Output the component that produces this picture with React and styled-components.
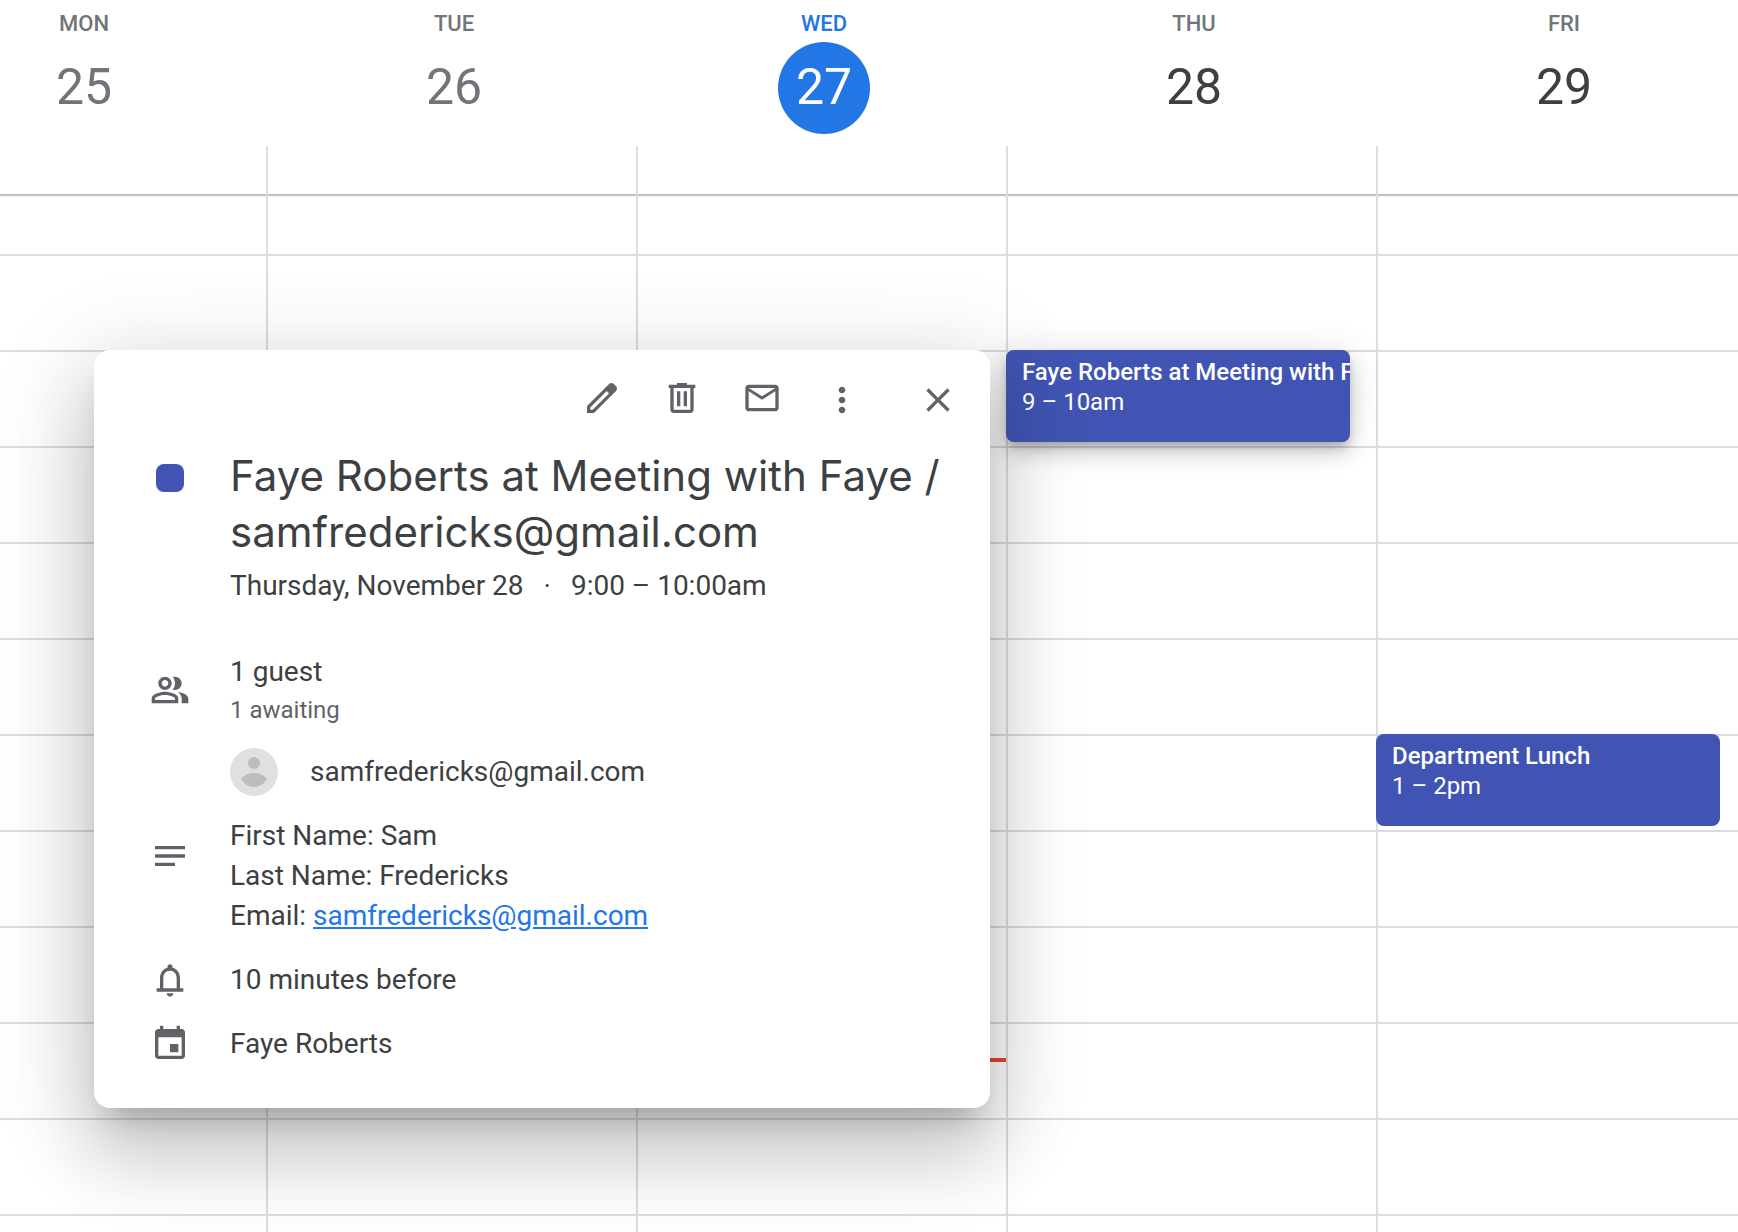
import styled, { createGlobalStyle } from "styled-components";

const HOUR_HEIGHT = 96;
const FIRST_HOUR = 8;
const FIRST_HOUR_TOP = 60;

const hourToTop = (hour) => FIRST_HOUR_TOP + (hour - FIRST_HOUR) * HOUR_HEIGHT;

const HOURS = Array.from({ length: 16 }, (_, index) => FIRST_HOUR + index);

const DAYS = [
  { key: "mon", label: "MON", date: 25, status: "past", events: [] },
  { key: "tue", label: "TUE", date: 26, status: "past", events: [] },
  { key: "wed", label: "WED", date: 27, status: "today", now: 16.375, events: [] },
  {
    key: "thu",
    label: "THU",
    date: 28,
    status: "future",
    events: [
      {
        title: "Faye Roberts at Meeting with Faye / samfredericks@gmail.com",
        time: "9 – 10am",
        start: 9,
        open: true,
      },
    ],
  },
  {
    key: "fri",
    label: "FRI",
    date: 29,
    status: "future",
    events: [{ title: "Department Lunch", time: "1 – 2pm", start: 13 }],
  },
];

const ICONS = {
  edit: "M20.41 4.94l-1.35-1.35c-.78-.78-2.05-.78-2.83 0L3 16.82V21h4.18L20.41 7.77c.79-.78.79-2.05 0-2.83zM6.41 19.06L5 19v-1.36l9.82-9.82 1.41 1.41-9.82 9.83z",
  trash:
    "M15 4V3H9v1H4v2h1v13c0 1.1.9 2 2 2h10c1.1 0 2-.9 2-2V6h1V4h-5zm2 15H7V6h10v13zM9 8h2v9H9V8zm4 0h2v9h-2V8z",
  mail: "M22 6c0-1.1-.9-2-2-2H4c-1.1 0-2 .9-2 2v12c0 1.1.9 2 2 2h16c1.1 0 2-.9 2-2V6zm-2 0l-8 5-8-5h16zm0 12H4V8l8 5 8-5v10z",
  more: "M12 8c1.1 0 2-.9 2-2s-.9-2-2-2-2 .9-2 2 .9 2 2 2zm0 2c-1.1 0-2 .9-2 2s.9 2 2 2 2-.9 2-2-.9-2-2-2zm0 6c-1.1 0-2 .9-2 2s.9 2 2 2 2-.9 2-2-.9-2-2-2z",
  close:
    "M19 6.41L17.59 5 12 10.59 6.41 5 5 6.41 10.59 12 5 17.59 6.41 19 12 13.41 17.59 19 19 17.59 13.41 12z",
  people:
    "M15 8c0-1.42-.5-2.73-1.33-3.76.42-.14.86-.24 1.33-.24 2.21 0 4 1.79 4 4s-1.79 4-4 4c-.43 0-.84-.09-1.23-.21-.03-.01-.06-.02-.1-.03A5.98 5.98 0 0 0 15 8zm1.66 5.13C18.03 14.06 19 15.32 19 17v3h4v-3c0-2.18-3.58-3.47-6.34-3.87zM9 6c-1.1 0-2 .9-2 2s.9 2 2 2 2-.9 2-2-.9-2-2-2zm0 9c-2.7 0-5.8 1.29-6 2.01V18h12v-1c-.2-.71-3.3-2-6-2zM9 4c2.21 0 4 1.79 4 4s-1.79 4-4 4-4-1.79-4-4 1.79-4 4-4zm0 9c2.67 0 8 1.34 8 4v3H1v-3c0-2.66 5.33-4 8-4z",
  notes: "M3 18h12v-2H3v2zM3 6v2h18V6H3zm0 7h18v-2H3v2z",
  bell: "M18 17v-6c0-3.07-1.63-5.64-4.5-6.32V4c0-.83-.67-1.5-1.5-1.5s-1.5.67-1.5 1.5v.68C7.63 5.36 6 7.92 6 11v6H4v2h16v-2h-2zm-2 0H8v-6c0-2.48 1.51-4.5 4-4.5s4 2.02 4 4.5v6zm-4 5c1.1 0 2-.9 2-2h-4c0 1.1.89 2 2 2z",
  calendar:
    "M17 12h-5v5h5v-5zM16 1v2H8V1H6v2H5c-1.1 0-2 .9-2 2v14c0 1.1.9 2 2 2h14c1.1 0 2-.9 2-2V5c0-1.1-.9-2-2-2h-1V1h-2zm3 18H5V8h14v11z",
};

function Icon({ name }) {
  return (
    <IconSvg viewBox="0 0 24 24" aria-hidden="true">
      <path fillRule="evenodd" d={ICONS[name]} />
    </IconSvg>
  );
}

function EventDetails({ start }) {
  return (
    <Popup role="dialog" aria-labelledby="event-title" $top={hourToTop(start)}>
      <Toolbar>
        <EventActions>
          <IconButton type="button" aria-label="Edit event">
            <Icon name="edit" />
          </IconButton>
          <IconButton type="button" aria-label="Delete event">
            <Icon name="trash" />
          </IconButton>
          <IconButton type="button" aria-label="Email guests">
            <Icon name="mail" />
          </IconButton>
        </EventActions>
        <IconButton type="button" aria-label="Options">
          <Icon name="more" />
        </IconButton>
        <CloseButton type="button" aria-label="Close">
          <Icon name="close" />
        </CloseButton>
      </Toolbar>

      <TitleRow>
        <Swatch />
        <div>
          <Title id="event-title">
            Faye Roberts at Meeting with Faye / samfredericks@gmail.com
          </Title>
          <When>
            <span>Thursday, November 28</span>
            <span>·</span>
            <span>9:00 – 10:00am</span>
          </When>
        </div>
      </TitleRow>

      <Row $gap={46}>
        <Icon name="people" />
        <div>
          <Text>1 guest</Text>
          <Awaiting>1 awaiting</Awaiting>
        </div>
      </Row>
      <Guest>
        <Avatar viewBox="0 0 48 48" aria-hidden="true">
          <circle cx="24" cy="24" r="24" fill="#e0e0e0" />
          <circle cx="24" cy="15" r="6" fill="#bdbdbd" />
          <path d="M11 31c3-4 8-6 13-6s10 2 13 6c-3 5-8 8-13 8s-10-3-13-8z" fill="#bdbdbd" />
        </Avatar>
        <Text>samfredericks@gmail.com</Text>
      </Guest>
      <Row $gap={20} $alignTop>
        <NotesIcon>
          <Icon name="notes" />
        </NotesIcon>
        <div>
          <Text>First Name: Sam</Text>
          <Text>Last Name: Fredericks</Text>
          <Text>
            Email: <MailLink href="mailto:samfredericks@gmail.com">samfredericks@gmail.com</MailLink>
          </Text>
        </div>
      </Row>
      <Row $gap={24}>
        <Icon name="bell" />
        <Text>10 minutes before</Text>
      </Row>
      <Row $gap={24}>
        <Icon name="calendar" />
        <Text>Faye Roberts</Text>
      </Row>
    </Popup>
  );
}

export default function App() {
  return (
    <Page>
      <GlobalStyle />
      <Week>
        {DAYS.map((day) => (
          <DayHeader key={day.key}>
            <DayName $status={day.status}>{day.label}</DayName>
            <DayNumber $status={day.status}>{day.date}</DayNumber>
          </DayHeader>
        ))}
      </Week>
      <AllDayRow>
        {DAYS.map((day) => (
          <AllDayCell key={day.key} />
        ))}
      </AllDayRow>
      <Week>
        {DAYS.map((day) => (
          <DayColumn key={day.key}>
            {HOURS.map((hour) => (
              <HourCell key={hour} $first={hour === FIRST_HOUR} />
            ))}
            {day.now && <NowLine $top={hourToTop(day.now)} />}
            {day.events.map((event) => (
              <EventChip
                key={event.title}
                type="button"
                $top={hourToTop(event.start)}
                $open={event.open}
              >
                <EventTitle>{event.title}</EventTitle>
                <EventTime>{event.time}</EventTime>
              </EventChip>
            ))}
            {day.events
              .filter((event) => event.open)
              .map((event) => (
                <EventDetails key={event.title} start={event.start} />
              ))}
          </DayColumn>
        ))}
      </Week>
    </Page>
  );
}

const GlobalStyle = createGlobalStyle`
  *, *::before, *::after {
    box-sizing: border-box;
  }

  body {
    margin: 0;
    background: #fff;
    font-family: Roboto, "Liberation Sans", sans-serif;
  }
`;

const Page = styled.main`
  height: 100vh;
  overflow: hidden;
  color: #3c4043;
`;

/* The week is wider than the window, Monday is cut off on the left. */
const Week = styled.div`
  display: grid;
  grid-template-columns: repeat(5, 1fr);
  width: calc(100% + 112px);
  margin-left: -104px;
`;

const DayHeader = styled.div`
  display: flex;
  flex-direction: column;
  align-items: center;
  gap: 4px;
  padding: 10px 0 12px 6px;
`;

const DAY_NAME_COLORS = { past: "#70757a", today: "#2376e6", future: "#70757a" };
const DAY_NUMBER_COLORS = { past: "#70757a", today: "#fff", future: "#3c4043" };

const DayName = styled.span`
  color: ${({ $status }) => DAY_NAME_COLORS[$status]};
  font-size: 22px;
  font-weight: 500;
  line-height: 28px;
`;

const DayNumber = styled.span`
  display: flex;
  align-items: center;
  justify-content: center;
  width: 92px;
  height: 92px;
  padding-bottom: 2px;
  border-radius: 50%;
  background: ${({ $status }) => ($status === "today" ? "#2376e6" : "transparent")};
  color: ${({ $status }) => DAY_NUMBER_COLORS[$status]};
  font-size: 50px;
`;

const AllDayRow = styled(Week)`
  position: relative;
  height: 48px;
  box-shadow:
    0 1px 0 rgba(0, 0, 0, 0.1),
    0 2px 0 rgba(0, 0, 0, 0.16),
    0 3px 0 rgba(0, 0, 0, 0.06);
`;

const AllDayCell = styled.div`
  border-left: 2px solid #dadce0;
`;

const DayColumn = styled.div`
  position: relative;
  border-left: 2px solid #dadce0;
`;

const HourCell = styled.div`
  height: ${({ $first }) => ($first ? FIRST_HOUR_TOP + 2 : HOUR_HEIGHT)}px;
  border-bottom: 2px solid #dadce0;
`;

const NowLine = styled.div`
  position: absolute;
  top: ${({ $top }) => $top}px;
  left: 0;
  right: 0;
  height: 4px;
  background: #ea4335;
`;

const EventChip = styled.button`
  position: absolute;
  z-index: 1;
  top: ${({ $top }) => $top}px;
  left: -2px;
  right: 26px;
  height: 92px;
  display: flex;
  flex-direction: column;
  align-items: flex-start;
  padding: 7px 0 0 16px;
  overflow: hidden;
  border: 0;
  border-radius: 8px;
  background: #4154b3;
  box-shadow: ${({ $open }) =>
    $open
      ? "0 12px 20px rgba(0, 0, 0, 0.14), 0 2px 36px rgba(0, 0, 0, 0.12), 0 6px 10px -2px rgba(0, 0, 0, 0.2)"
      : "none"};
  color: #fff;
  font-family: inherit;
  font-size: 24px;
  line-height: 30px;
  text-align: left;
  white-space: nowrap;
`;

const EventTitle = styled.span`
  font-weight: 500;
`;

const EventTime = styled.span`
  font-weight: 400;
`;

const Popup = styled.section`
  position: absolute;
  z-index: 2;
  top: ${({ $top }) => $top}px;
  right: calc(100% + 18px);
  width: 896px;
  padding: 10px 12px 44px 56px;
  border-radius: 16px;
  background: #fff;
  box-shadow:
    0 48px 76px 6px rgba(0, 0, 0, 0.14),
    0 18px 92px 16px rgba(0, 0, 0, 0.12),
    0 22px 30px -14px rgba(0, 0, 0, 0.2);
`;

const Toolbar = styled.div`
  display: flex;
  justify-content: flex-end;
`;

const EventActions = styled.div`
  display: flex;
  padding-bottom: 4px;
`;

const IconButton = styled.button`
  display: flex;
  align-items: center;
  justify-content: center;
  width: 80px;
  min-height: 76px;
  padding: 0;
  border: 0;
  border-radius: 50%;
  background: transparent;
`;

const CloseButton = styled(IconButton)`
  margin-left: 16px;
`;

const IconSvg = styled.svg`
  display: block;
  width: 40px;
  height: 40px;
  fill: #5f6368;
`;

const Row = styled.div`
  display: grid;
  grid-template-columns: 40px 1fr;
  column-gap: 40px;
  align-items: ${({ $alignTop }) => ($alignTop ? "start" : "center")};
  margin-top: ${({ $gap }) => $gap}px;
`;

const TitleRow = styled.div`
  display: grid;
  grid-template-columns: 40px 1fr;
  column-gap: 40px;
  margin-top: 8px;
`;

const Swatch = styled.span`
  width: 28px;
  height: 28px;
  margin: 16px 6px 0;
  border-radius: 8px;
  background: #4154b3;
`;

const Title = styled.h2`
  margin: 0;
  font-family: Inter, Roboto, sans-serif;
  font-size: 42px;
  font-weight: 400;
  line-height: 56px;
`;

const Text = styled.p`
  margin: 0;
  font-size: 28px;
  line-height: 40px;
`;

const When = styled(Text)`
  display: flex;
  gap: 20px;
  margin-top: 6px;
`;

const Awaiting = styled(Text)`
  color: #5f6368;
  font-size: 24px;
  line-height: 36px;
`;

const Guest = styled.div`
  display: flex;
  align-items: center;
  gap: 32px;
  margin-top: 20px;
  padding-left: 80px;
`;

const Avatar = styled.svg`
  width: 48px;
  height: 48px;
`;

const NotesIcon = styled.span`
  padding-top: 20px;
`;

const MailLink = styled.a`
  color: #2376e6;
`;
